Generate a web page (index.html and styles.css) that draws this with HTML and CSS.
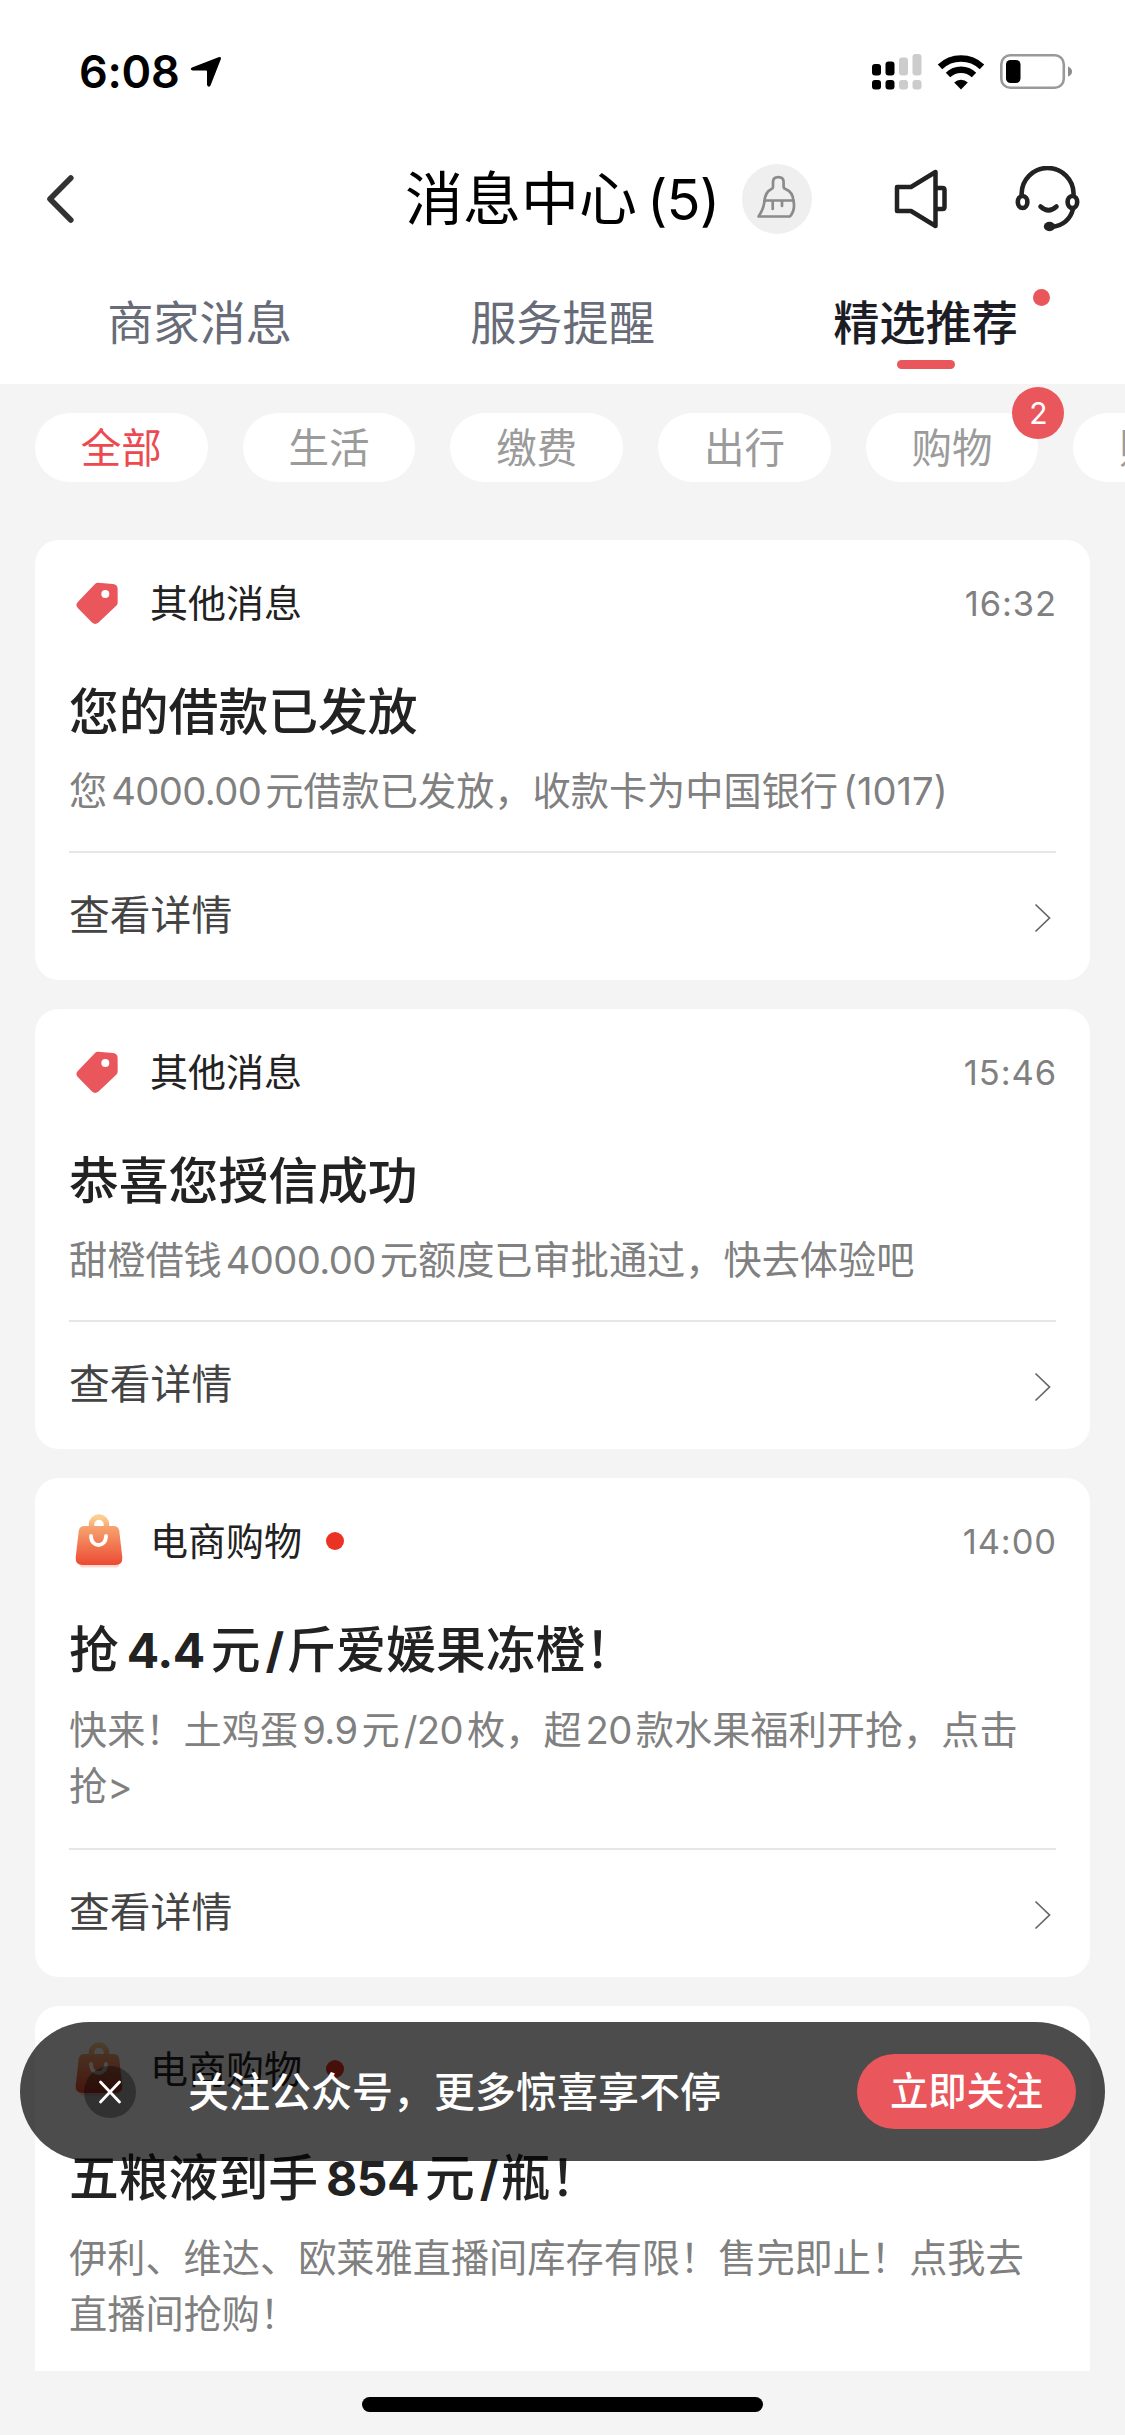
FILE: index.html
```html
<!DOCTYPE html>
<html lang="zh-CN">
<head>
<meta charset="utf-8">
<title>消息中心</title>
<link rel="stylesheet" href="styles.css">
</head>
<body>
<svg class="defs" width="0" height="0" aria-hidden="true">
  <defs>
    <linearGradient id="bagFill" x1="0" y1="0" x2="0" y2="1">
      <stop offset="0" stop-color="#f6a56f"/>
      <stop offset="1" stop-color="#ec4a33"/>
    </linearGradient>
    <linearGradient id="bagHandle" x1="0" y1="0" x2="0" y2="1">
      <stop offset="0" stop-color="#fbcf92"/>
      <stop offset="1" stop-color="#f6a56f"/>
    </linearGradient>
    <symbol id="tag" viewBox="0 0 50 54">
      <path fill="#e9565c" fill-rule="evenodd" d="M23 6.700L38 7.900Q42.500 8.400 42.600 12.500L42.700 26.500Q42.700 28 41.500 29.400L23.500 46.500Q20 49.400 17 46.500L2.800 32Q0 28.800 2.800 26L20 8Q21.300 6.600 23 6.700ZM30.300 14A4 4 0 1 0 30.300 22A4 4 0 1 0 30.300 14Z"/>
    </symbol>
    <symbol id="bag" viewBox="0 0 50 56">
      <rect x="5" y="50" width="39" height="4.500" rx="2.200" fill="#fbd9d0"/>
      <path fill="none" stroke="url(#bagHandle)" stroke-width="5.500" d="M16.500 15V11.500A7.500 7.500 0 0 1 31.500 11.500V15"/>
      <path fill="url(#bagFill)" d="M9.500 13H38.500Q43.500 13 44.300 18L47.300 44.500Q47.800 52 40.500 52H7.500Q0.200 52 0.700 44.500L3.700 18Q4.500 13 9.500 13Z"/>
      <path fill="none" stroke="#fff" stroke-width="3.800" stroke-linecap="round" d="M16 23C16 35 31 35 31 23"/>
    </symbol>
    <symbol id="chevron" viewBox="0 0 18 30">
      <path fill="none" stroke="#666" stroke-width="1.700" d="M1.500 1.500L15.500 15L1.500 28.500"/>
    </symbol>
  </defs>
</svg>

<header class="top">
  <div class="status">
    <span class="clock">6:08</span>
    <svg class="locate" width="32" height="32" viewBox="0 0 32 32"><path d="M28.500 1.200Q31.800 .5 30.700 3.600L20.500 29.500Q18.500 32.200 17 29V15.500Q17 14.500 16 14.500H2.500Q-.8 13.300 2 11.400Z"/></svg>
    <svg class="signal" width="50" height="36" viewBox="0 0 50 36">
      <g><rect x="0" y="10" width="9" height="11.500" rx="3"/><rect x="13.500" y="7.500" width="9" height="14" rx="3"/><rect x="0" y="26" width="9" height="9.500" rx="3"/><rect x="13.500" y="26" width="9" height="9.500" rx="3"/></g>
      <g fill="#ccc"><rect x="27" y="3.500" width="9" height="18" rx="3"/><rect x="40.500" y="0" width="9" height="21.500" rx="3"/><rect x="27" y="26" width="9" height="9.500" rx="3"/><rect x="40.500" y="26" width="9" height="9.500" rx="3"/></g>
    </svg>
    <svg class="wifi" width="48" height="36" viewBox="0 0 48 36">
      <path fill="none" stroke="#000" stroke-width="6.500" d="M3 12.800A30.500 30.500 0 0 1 45 12.800M11 21A19 19 0 0 1 37 21"/>
      <path d="M24 35.500L17.200 28.500A10 10 0 0 1 30.800 28.500Z"/>
    </svg>
    <svg class="battery" width="74" height="36" viewBox="0 0 74 36">
      <rect x="1.300" y="1.300" width="62.500" height="32.400" rx="9" fill="none" stroke="#999" stroke-width="2.600"/>
      <rect x="6" y="6" width="14.500" height="23" rx="4.500"/>
      <path fill="#8c8c8c" d="M68 12.500Q72 14 72 17.500T68 22.500Z"/>
    </svg>
  </div>

  <div class="nav">
    <svg class="back" width="30" height="52" viewBox="0 0 30 52"><path fill="none" stroke="#333" stroke-width="5.600" stroke-linecap="round" stroke-linejoin="round" d="M24.800 5L4 26L24.800 47"/></svg>
    <h1 class="nav-title">消息中心<span class="count">(5)</span></h1>
    <span class="clean">
      <svg width="70" height="70" viewBox="0 0 70 70"><g fill="none" stroke="#8b8b8b" stroke-width="2.700" stroke-linejoin="round" stroke-linecap="round"><path d="M31 23V18Q31 13.200 36.300 13.200T41.600 18V23Q41.800 24.400 43.500 25Q51 28 51.500 37Q53.500 46 48 52.500H16.500Q21.300 46 22.500 37.500Q23 28 29.500 25Q31 24.500 31 23Z"/><path d="M22.500 36.500H51.500M30.700 37V45M40 37V42"/></g></svg>
    </span>
    <svg class="speaker" width="54" height="60" viewBox="0 0 54 60"><g fill="none" stroke="#222" stroke-width="4.500" stroke-linejoin="round"><path d="M3 18H17L41.500 3V57L17 42H3Z"/><path d="M41.500 19H48.500Q50.500 19 50.500 21V38Q50.500 40 48.500 40H41.500"/></g></svg>
    <svg class="headset" width="66" height="66" viewBox="0 0 66 66"><g fill="none" stroke="#222" stroke-width="4.600" stroke-linecap="round"><path d="M6.600 28A26 26 0 0 1 58.600 28"/><ellipse cx="7.600" cy="36" rx="4.800" ry="6"/><ellipse cx="57.400" cy="36" rx="4.800" ry="6"/><path d="M25.500 40.500Q33.500 48 41.500 40.500M58 43Q54 58.500 37 61"/></g><ellipse cx="34.500" cy="60.500" rx="5.700" ry="4.700" fill="#222"/></svg>
  </div>

  <nav class="tabs">
    <a class="tab">商家消息</a>
    <a class="tab">服务提醒</a>
    <a class="tab tab-active">精选推荐<i class="tab-dot"></i></a>
  </nav>
</header>

<div class="chips">
  <span class="chip chip-active">全部</span>
  <span class="chip">生活</span>
  <span class="chip">缴费</span>
  <span class="chip">出行</span>
  <span class="chip">购物<b class="badge">2</b></span>
  <span class="chip">财富</span>
</div>

<main class="list">
  <article class="card">
    <div class="card-head"><svg class="kind"><use href="#tag"/></svg><span class="kind-name">其他消息</span><time>16:32</time></div>
    <h2>您的借款已发放</h2>
    <p>您<span class="n">4000.00</span>元借款已发放，收款卡为中国银行<span class="n paren">(1017)</span></p>
    <div class="more"><span>查看详情</span><svg class="go"><use href="#chevron"/></svg></div>
  </article>

  <article class="card">
    <div class="card-head"><svg class="kind"><use href="#tag"/></svg><span class="kind-name">其他消息</span><time>15:46</time></div>
    <h2>恭喜您授信成功</h2>
    <p>甜橙借钱<span class="n">4000.00</span>元额度已审批通过，快去体验吧</p>
    <div class="more"><span>查看详情</span><svg class="go"><use href="#chevron"/></svg></div>
  </article>

  <article class="card">
    <div class="card-head"><svg class="kind"><use href="#bag"/></svg><span class="kind-name">电商购物</span><i class="unread"></i><time>14:00</time></div>
    <h2>抢<span class="n">4.4</span>元<span class="n slash">/</span>斤爱媛果冻橙！</h2>
    <p class="two">快来！土鸡蛋<span class="n">9.9</span>元<span class="n">/20</span>枚，超<span class="n">20</span>款水果福利开抢，点击<br>抢&gt;</p>
    <div class="more"><span>查看详情</span><svg class="go"><use href="#chevron"/></svg></div>
  </article>

  <article class="card">
    <div class="card-head"><svg class="kind"><use href="#bag"/></svg><span class="kind-name">电商购物</span><i class="unread"></i></div>
    <h2>五粮液到手<span class="n">854</span>元<span class="n slash">/</span>瓶！</h2>
    <p class="two">伊利、维达、欧莱雅直播间库存有限！售完即止！点我去<br>直播间抢购！</p>
  </article>
</main>

<footer class="bottom"><i class="home"></i></footer>

<aside class="follow">
  <span class="close"><svg width="24" height="24" viewBox="0 0 24 24"><path fill="none" stroke="#fff" stroke-width="2.800" stroke-linecap="round" d="M2.500 2L21.500 22M21.500 2L2.500 22"/></svg></span>
  <span class="follow-text">关注公众号，更多惊喜享不停</span>
  <button class="follow-btn">立即关注</button>
</aside>
</body>
</html>
```
FILE: styles.css
```css
* { box-sizing: border-box; }

body {
  margin: 0;
  width: 1125px;
  height: 2435px;
  overflow: hidden;
  position: relative;
  display: flex;
  flex-direction: column;
  background: #f4f4f4;
  font-family: Inter, "Noto Sans CJK SC", sans-serif;
  color: #222;
}

svg { display: block; flex: none; }
.defs { position: absolute; }
h1, h2, p { margin: 0; }

/* header */
.top { height: 384px; flex: none; background: #fff; }

.status {
  height: 144px;
  padding: 0 52px 0 79px;
  display: flex;
  align-items: center;
  color: #000;
}
.clock { font-size: 45px; font-weight: 600; line-height: 60px; letter-spacing: -0.3px; width: 111px; }
.signal { margin-left: auto; }
.wifi { margin-left: 15px; }
.battery { margin-left: 15px; margin-right: -1px; }

.nav {
  height: 110px;
  padding-left: 46px;
  display: flex;
  align-items: center;
}
.nav-title {
  margin-left: 329px;
  width: 337px;
  font-size: 58px;
  font-weight: 400;
  line-height: 80px;
  color: #000;
  white-space: nowrap;
}
.count { margin-left: 10px; font-size: 56px; letter-spacing: -0.9px; }
.clean { width: 70px; height: 70px; border-radius: 50%; background: #efefef; }
.speaker { margin-left: 82px; }
.headset { margin-left: 67px; }

.tabs { height: 130px; padding: 0 18px; display: flex; }
.tab {
  flex: 1;
  position: relative;
  text-align: center;
  font-size: 46.200px;
  line-height: 138px;
  color: #676c78;
}
.tab-active { color: #1d1d26; font-weight: 500; }
.tab-active::after {
  content: "";
  position: absolute;
  left: 50%;
  bottom: 15px;
  width: 58px;
  height: 9px;
  margin-left: -29px;
  border-radius: 5px;
  background: #e9565c;
}
.tab-dot {
  position: absolute;
  left: 289px;
  top: 35px;
  width: 17px;
  height: 17px;
  border-radius: 50%;
  background: #e9565c;
}

/* category chips */
.chips { flex: none; height: 156px; overflow: hidden; padding: 29px 0 0 35px; display: flex; gap: 35px; }
.chip {
  position: relative;
  flex: none;
  width: 172.700px;
  height: 69px;
  border-radius: 35px;
  background: #fff;
  text-align: center;
  font-size: 40.500px;
  line-height: 71px;
  color: #9b9b9b;
}
.chip-active { color: #ec4a50; }
.badge {
  position: absolute;
  right: -26px;
  top: -26px;
  width: 52px;
  height: 52px;
  border-radius: 50%;
  background: #e9565c;
  color: #fff;
  font-size: 30px;
  font-weight: 400;
  line-height: 53px;
}

/* message cards */
.list {
  flex: none;
  height: 1831px;
  overflow: hidden;
  padding: 0 35px;
  display: flex;
  flex-direction: column;
  gap: 29px;
}
.card { flex: none; padding: 0 34px; border-radius: 24px; background: #fff; }
.card:last-child { padding-bottom: 129px; }
.card-head { height: 126px; display: flex; align-items: center; padding-left: 6px; }
.kind { width: 50px; height: 56px; margin-right: 25px; }
.kind-name { font-size: 38px; line-height: 56px; }
.unread { width: 18px; height: 18px; margin-left: 24px; border-radius: 50%; background: #eb3323; }
time { margin-left: auto; font-size: 34.500px; letter-spacing: .9px; margin-right: -1px; color: #808080; }
h2 {
  height: 97px;
  padding-top: 11px;
  font-size: 49.800px;
  font-weight: 500;
  line-height: 70px;
  white-space: nowrap;
}
h2 .n { font-size: 48px; font-weight: 700; letter-spacing: -.5px; margin: 0 6px 0 8px; }
h2 .slash { margin: 0 3px 0 5px; }
p {
  height: 88px;
  font-size: 38.200px;
  line-height: 56px;
  color: #808080;
  white-space: nowrap;
}
p.two { height: 147px; padding-top: 1px; }
p .n { margin: 0 4px; letter-spacing: -.6px; }
p .paren { margin-left: 5px; letter-spacing: 0; }
.more {
  height: 129px;
  border-top: 2px solid #e6e6e6;
  display: flex;
  justify-content: space-between;
  font-size: 40.800px;
  line-height: 125px;
  color: #444;
}
.go { width: 18px; height: 30px; margin: 50px 4px 0 0; }

.bottom { flex: 1; display: flex; justify-content: center; padding-top: 26px; }
.home { width: 401px; height: 15px; border-radius: 8px; background: #000; }

/* floating follow bar */
.follow {
  position: absolute;
  left: 20px;
  top: 2022px;
  width: 1085px;
  height: 139px;
  padding: 0 29px 0 64px;
  border-radius: 70px;
  background: rgba(0, 0, 0, .7);
  display: flex;
  align-items: center;
  color: #fff;
}
.close {
  width: 52px;
  height: 52px;
  border-radius: 50%;
  background: rgba(0, 0, 0, .35);
  display: flex;
  align-items: center;
  justify-content: center;
}
.follow-text { margin-left: 52px; font-size: 41px; font-weight: 500; line-height: 60px; white-space: nowrap; }
.follow-btn {
  margin-left: auto;
  width: 219px;
  height: 75px;
  padding: 0;
  border: 0;
  border-radius: 38px;
  background: #e9565c;
  color: #fff;
  font: 500 38.300px/75px Inter, "Noto Sans CJK SC", sans-serif;
}
```
